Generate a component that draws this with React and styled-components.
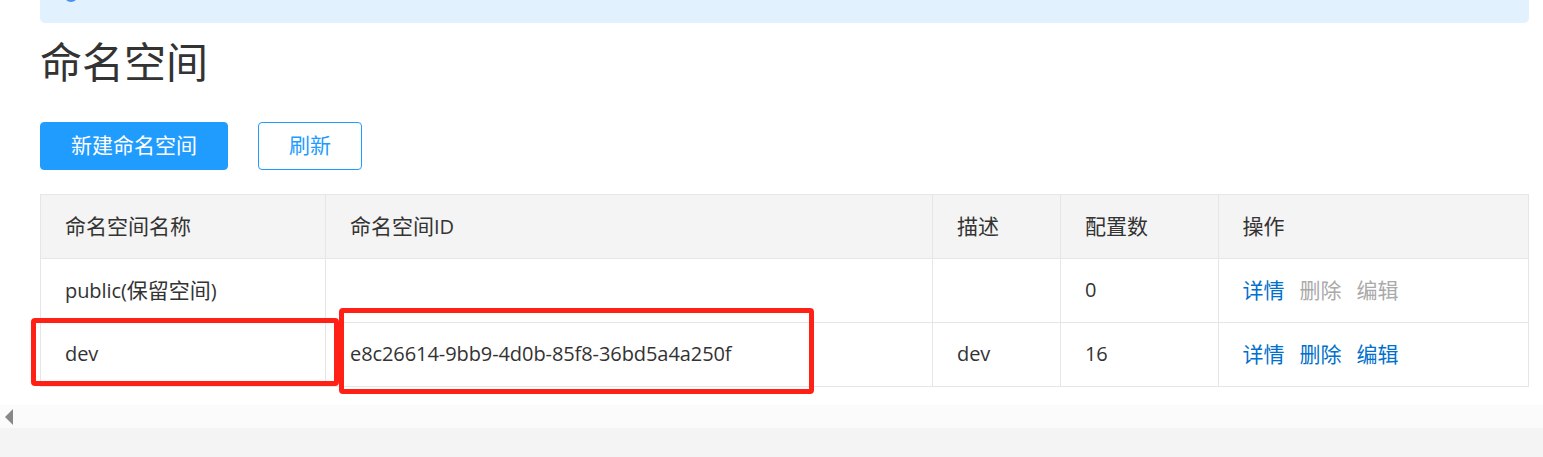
import React from 'react'
import styled, { createGlobalStyle } from 'styled-components'

const GlobalStyle = createGlobalStyle`
  html, body {
    margin: 0;
    padding: 0;
    background: #fff;
  }
  body {
    font-family: "Open Sans", "Noto Sans CJK SC", sans-serif;
    color: #333;
    overflow: hidden;
  }
`

const Page = styled.div`
  position: relative;
  width: 1543px;
  height: 457px;
  display: flex;
  flex-direction: column;
`

const Content = styled.div`
  height: 405px;
  padding: 0 14px 0 40px;
  box-sizing: border-box;
`

const Alert = styled.div`
  height: 23px;
  background: #e2f1fe;
  border-radius: 0 0 5px 5px;
  padding-left: 24px;
  overflow: hidden;
`

const AlertIcon = styled.span`
  display: block;
  width: 14px;
  height: 14px;
  margin-top: -12px;
  border-radius: 50%;
  background: #4a90f0;
`

const Title = styled.h1`
  margin: 0;
  padding-top: 13px;
  height: 86px;
  box-sizing: border-box;
  font-size: 42px;
  line-height: 52px;
  font-weight: 400;
  color: #333;
`

const Toolbar = styled.div`
  display: flex;
  gap: 30px;
  margin-top: 13px;
`

const Button = styled.button`
  height: 48px;
  width: ${(p) => p.$width}px;
  padding: 0 0 4px;
  box-sizing: border-box;
  border-radius: 4px;
  border: 1px solid #209cff;
  background: ${(p) => (p.$primary ? '#209cff' : '#fff')};
  color: ${(p) => (p.$primary ? '#fff' : '#209cff')};
  font-family: inherit;
  font-size: 21px;
`

const Table = styled.table`
  margin-top: 24px;
  width: 1488px;
  table-layout: fixed;
  border-collapse: collapse;
  font-size: 21px;
`

const Col = styled.col`
  width: ${(p) => p.$width}px;
`

const HeadCell = styled.th`
  height: 64px;
  padding: 0 0 4px ${(p) => p.$pad || 24}px;
  box-sizing: border-box;
  background: #f4f4f4;
  border: 1px solid #e6e6e6;
  font-weight: 400;
  text-align: left;
`

const Cell = styled.td`
  height: 64px;
  padding: 0 0 4px ${(p) => p.$pad || 24}px;
  box-sizing: border-box;
  border: 1px solid #e6e6e6;
`

// latin values run a little smaller than the chinese around them
const Value = styled.span`
  font-size: 20px;
  letter-spacing: -0.08px;
`

const Action = styled.a`
  margin-right: 15px;
  color: ${(p) => (p.$disabled ? '#aaa' : '#0070cc')};
`

const ScrollBar = styled.div`
  height: 23px;
  background: #fbfbfb;
  display: flex;
  align-items: center;
  padding-left: 5px;
`

const ScrollArrow = styled.span`
  width: 0;
  height: 0;
  border-style: solid;
  border-width: 8px 8px 8px 0;
  border-color: transparent #888 transparent transparent;
`

const Footer = styled.div`
  flex: 1;
  background: #f4f4f4;
`

// the hand-drawn red marks lying over the table
const Mark = styled.div`
  position: absolute;
  left: ${(p) => p.$left}px;
  top: ${(p) => p.$top}px;
  width: ${(p) => p.$width}px;
  height: ${(p) => p.$height}px;
  box-sizing: border-box;
  border: 5px solid #ff2116;
  border-radius: 4px;
`

const columns = [285, 607, 128, 158, 310]
const rows = [
  {
    key: 'public',
    name: <><Value>public(</Value>保留空间<Value>)</Value></>,
    id: '',
    desc: '',
    count: 0,
    locked: true,
  },
  {
    key: 'dev',
    name: <Value>dev</Value>,
    id: 'e8c26614-9bb9-4d0b-85f8-36bd5a4a250f',
    desc: 'dev',
    count: 16,
    locked: false,
  },
]

const App = () => {
  return (
    <Page>
      <GlobalStyle />
      <Content>
        <Alert>
          <AlertIcon />
        </Alert>
        <Title>命名空间</Title>
        <Toolbar>
          <Button $primary $width={188}>新建命名空间</Button>
          <Button $width={104}>刷新</Button>
        </Toolbar>
        <Table>
          <colgroup>
            {columns.map((w, i) => (
              <Col key={i} $width={w} />
            ))}
          </colgroup>
          <thead>
            <tr>
              <HeadCell>命名空间名称</HeadCell>
              <HeadCell>命名空间<Value>ID</Value></HeadCell>
              <HeadCell>描述</HeadCell>
              <HeadCell>配置数</HeadCell>
              <HeadCell $pad={23.6}>操作</HeadCell>
            </tr>
          </thead>
          <tbody>
            {rows.map((row) => (
              <tr key={row.key}>
                <Cell>{row.name}</Cell>
                <Cell><Value>{row.id}</Value></Cell>
                <Cell><Value>{row.desc}</Value></Cell>
                <Cell><Value>{row.count}</Value></Cell>
                <Cell $pad={23.6}>
                  <Action>详情</Action>
                  <Action $disabled={row.locked}>删除</Action>
                  <Action $disabled={row.locked}>编辑</Action>
                </Cell>
              </tr>
            ))}
          </tbody>
        </Table>
      </Content>
      <ScrollBar>
        <ScrollArrow />
      </ScrollBar>
      <Footer />
      <Mark $left={31} $top={318} $width={308} $height={68} />
      <Mark $left={339} $top={308} $width={475} $height={86} />
    </Page>
  )
}

export default App
